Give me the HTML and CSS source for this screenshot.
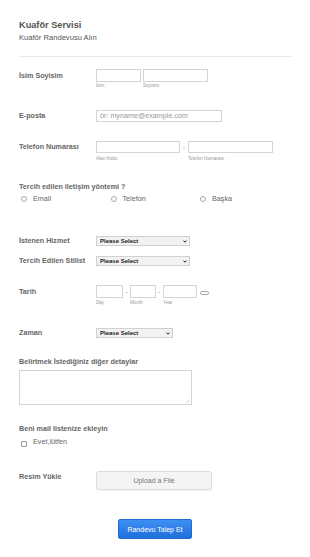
FILE: index.html
```html
<!DOCTYPE html>
<html>
<head>
    <title>Kuaför Servisi</title>

    <meta name="viewport" content="width=device-width, initial-scale=1.0">
    <link rel="stylesheet" href="styles.css">
</head>
<body>
    <form class="form">
        <div class="header">
            <h1>Kuaför Servisi</h1>
            <p>Kuaför Randevusu Alın</p>
        </div>

        <!-- Isim -->
        <div class="row row-name">
            <label class="label h13">İsim Soyisim</label>
            <div class="fields">
                <div class="sub">
                    <input type="text" class="input h13 w-first">
                    <span class="sublabel">İsim</span>
                </div>
                <div class="sub gap2">
                    <input type="text" class="input h13 w-last">
                    <span class="sublabel">Soyisim</span>
                </div>
            </div>
        </div>

        <div class="row row-email">
            <label class="label h12">E-posta</label>
            <input type="email" class="input h12 w-email" placeholder="ör: myname@example.com">
        </div>

        <div class="row row-phone">
            <label class="label h12">Telefon Numarası</label>
            <div class="fields">
                <div class="sub">
                    <input type="text" class="input h12 w-area">
                    <span class="sublabel sp3">Alan Kodu</span>
                </div>
                <span class="dash h12 w8">-</span>
                <div class="sub">
                    <input type="text" class="input h12 w-phone">
                    <span class="sublabel sp3">Telefon Numarası</span>
                </div>
            </div>
        </div>

        <div class="block block-contact">
            <label class="label-top">Tercih edilen iletişim yöntemi ?</label>
            <div class="radios">
                <label class="option"><input type="radio" name="contact"> Email</label>
                <label class="option"><input type="radio" name="contact"> Telefon</label>
                <label class="option"><input type="radio" name="contact"> Başka</label>
            </div>
        </div>

        <div class="row row-service">
            <label class="label h10">İstenen Hizmet</label>
            <div class="select-wrap w-select">
                <select class="select">
                    <option>Please Select</option>
                </select>
                <svg class="chevron" width="4" height="3" viewBox="0 0 4 3"><polyline points="0.5,0.6 2,2.2 3.5,0.6" fill="none" stroke="#222" stroke-width="1"/></svg>
            </div>
        </div>

        <div class="row row-stylist">
            <label class="label h10">Tercih Edilen Stilist</label>
            <div class="select-wrap w-select">
                <select class="select">
                    <option>Please Select</option>
                </select>
                <svg class="chevron" width="4" height="3" viewBox="0 0 4 3"><polyline points="0.5,0.6 2,2.2 3.5,0.6" fill="none" stroke="#222" stroke-width="1"/></svg>
            </div>
        </div>

        <div class="row row-date">
            <label class="label h13">Tarih</label>
            <div class="fields">
                <div class="sub">
                    <input type="text" class="input h13 w-day">
                    <span class="sublabel sp2">Day</span>
                </div>
                <span class="dash h13 w7">-</span>
                <div class="sub">
                    <input type="text" class="input h13 w-month">
                    <span class="sublabel sp2">Month</span>
                </div>
                <span class="dash h13 w7">-</span>
                <div class="sub">
                    <input type="text" class="input h13 w-year">
                    <span class="sublabel sp2">Year</span>
                </div>
                <span class="calendar"></span>
            </div>
        </div>

        <div class="row row-time">
            <label class="label h10">Zaman</label>
            <div class="select-wrap w-time">
                <select class="select">
                    <option>Please Select</option>
                </select>
                <svg class="chevron" width="4" height="3" viewBox="0 0 4 3"><polyline points="0.5,0.6 2,2.2 3.5,0.6" fill="none" stroke="#222" stroke-width="1"/></svg>
            </div>
        </div>

        <div class="block block-details">
            <label class="label-top">Belirtmek İstediğiniz diğer detaylar</label>
            <div class="textarea-wrap">
                <textarea class="textarea"></textarea>
                <svg class="grip" width="4" height="4" viewBox="0 0 4 4"><path d="M0.5 3.5 L3.5 0.5 M2 3.5 L3.5 2" stroke="#bbb" stroke-width="0.6"/></svg>
            </div>
        </div>

        <div class="block block-mail">
            <label class="label-top">Beni mail listenize ekleyin</label>
            <label class="check"><input type="checkbox"> Evet,lütfen</label>
        </div>

        <div class="row row-upload">
            <label class="label h10 push1">Resim Yükle</label>
            <button type="button" class="upload">Upload a File</button>
        </div>

        <div class="submit-row">
            <button type="submit" class="submit">Randevu Talep Et</button>
        </div>
    </form>
</body>
</html>
```

FILE: styles.css
```css
body {
    margin: 0;
    font-family: "Liberation Sans", Arial, sans-serif;
    background-color: #fff;
    color: #555;
}
.form {
    padding: 19px 19px 0;
}
.header {
    padding-bottom: 14px;
    border-bottom: 1px solid #e8e8e8;
}
.header h1 {
    margin: 0;
    font-size: 9.2px;
    line-height: 12px;
    font-weight: bold;
}
.header p {
    margin: 2px 0 0;
    font-size: 7.6px;
    line-height: 9px;
}

/* filas */
.row {
    display: flex;
    align-items: flex-start;
}
.row-name { margin-top: 12px; }
.row-email { margin-top: 21px; }
.row-phone { margin-top: 19px; }
.block-contact { margin-top: 20px; }
.row-service { margin-top: 33px; }
.row-stylist { margin-top: 10px; }
.row-date { margin-top: 19px; }
.row-time { margin-top: 22px; }
.block-details { margin-top: 19px; }
.block-mail { margin-top: 19px; }
.row-upload { margin-top: 24px; }
.submit-row { margin-top: 29px; }

.label {
    width: 77px;
    flex-shrink: 0;
    font-size: 7.2px;
    font-weight: bold;
    color: #666;
}
.label-top {
    display: block;
    font-size: 7.2px;
    font-weight: bold;
    line-height: 9px;
    color: #666;
}
.h10 { height: 10px; line-height: 10px; }
.h12 { height: 12px; line-height: 12px; }
.h13 { height: 13px; line-height: 13px; }
.push1 { padding-top: 1px; }

.fields {
    display: flex;
    align-items: flex-start;
}
.sub {
    display: flex;
    flex-direction: column;
}
.gap2 { margin-left: 2px; }

.input {
    box-sizing: border-box;
    border: 1px solid #d4d4d4;
    border-radius: 0;
    padding: 0 3px;
    margin: 0;
    font-family: inherit;
    font-size: 7.2px;
    color: #555;
    background-color: #fff;
}
.input::placeholder {
    color: #999;
}
.w-first { width: 45px; }
.w-last { width: 65px; }
.w-email { width: 126px; }
.w-area { width: 84px; }
.w-phone { width: 85px; }
.w-day { width: 27px; }
.w-month { width: 26px; }
.w-year { width: 34px; }

.sublabel {
    display: block;
    margin-top: 1px;
    font-size: 4.6px;
    line-height: 6px;
    color: #999;
}
.sp2 { margin-top: 2px; }
.sp3 { margin-top: 3px; }

.dash {
    text-align: center;
    font-size: 7px;
    color: #999;
}
.w7 { width: 7px; }
.w8 { width: 8px; }

.calendar {
    box-sizing: border-box;
    width: 9px;
    height: 4px;
    margin: 6px 0 0 3px;
    border: 1px solid #aaa;
    border-radius: 2px;
}

/* radios */
.radios {
    display: grid;
    grid-template-columns: 89.5px 89.5px 89.5px;
    margin-top: 3px;
    padding-left: 2px;
}
.option, .check {
    display: flex;
    align-items: center;
    gap: 6px;
    font-size: 7.2px;
    line-height: 9px;
    color: #666;
}
.option input, .check input {
    appearance: none;
    box-sizing: border-box;
    width: 6px;
    height: 6px;
    margin: 1px 0 0;
    border: 1px solid #aaa;
    background-color: #fff;
}
.option input {
    border-radius: 50%;
}
.check {
    margin-top: 4px;
    padding-left: 2px;
    align-items: flex-start;
}
.check input {
    margin-top: 4px;
    border-color: #999;
    border-radius: 1px;
}

/* selects */
.select-wrap {
    position: relative;
    height: 10px;
}
.w-select { width: 94px; }
.w-time { width: 77px; }
.select {
    appearance: none;
    display: block;
    box-sizing: border-box;
    width: 100%;
    height: 10px;
    margin: 0;
    padding: 0 0 0 3px;
    border: 1px solid #d0d0d0;
    border-radius: 0;
    background-color: #f2f2f2;
    font-family: inherit;
    font-size: 6px;
    font-weight: bold;
    line-height: 8px;
    color: #222;
}
.chevron {
    position: absolute;
    right: 3px;
    top: 3.5px;
}

.textarea-wrap {
    position: relative;
    width: 173px;
    margin-top: 4px;
}
.textarea {
    display: block;
    box-sizing: border-box;
    width: 173px;
    height: 35px;
    margin: 0;
    border: 1px solid #d4d4d4;
    border-radius: 0;
    padding: 2px;
    font-family: inherit;
    font-size: 7px;
    resize: none;
}
.grip {
    position: absolute;
    right: 2px;
    bottom: 2px;
}

/* botones */
.upload {
    box-sizing: border-box;
    width: 116px;
    height: 19px;
    margin: 0;
    padding: 0;
    border: 1px solid #dcdcdc;
    border-radius: 3px;
    background-color: #f4f4f4;
    box-shadow: 0 1px 1px rgba(0, 0, 0, 0.06);
    font-family: inherit;
    font-size: 7px;
    color: #777;
    cursor: pointer;
}
.submit-row {
    display: flex;
    justify-content: center;
}
.submit {
    box-sizing: border-box;
    width: 74px;
    height: 20px;
    margin: 0;
    padding: 0;
    border: 1px solid #1f6ad0;
    border-radius: 2px;
    background: linear-gradient(#3d90f3, #1f6fdc);
    font-family: inherit;
    font-size: 7px;
    color: #fff;
    cursor: pointer;
}
.submit:hover {
    background: #1a62c8;
}
```
